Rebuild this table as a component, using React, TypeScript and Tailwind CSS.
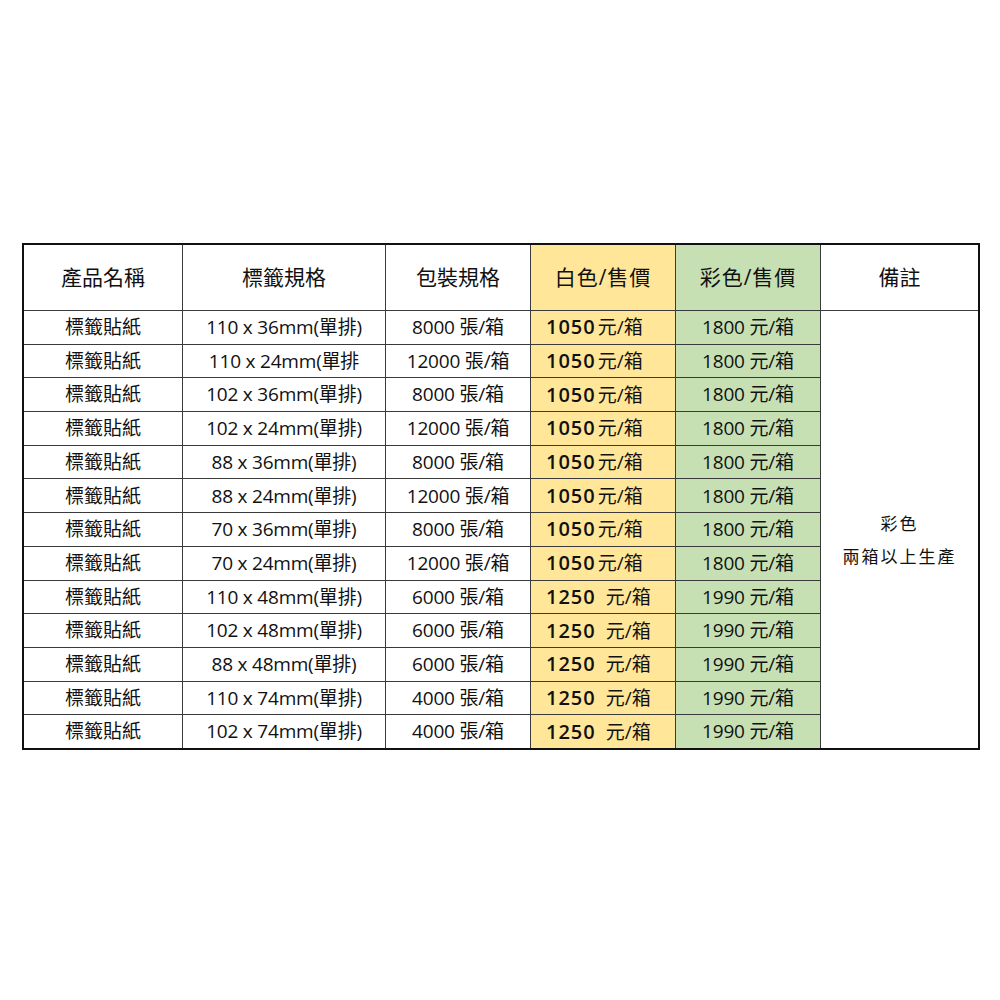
import React from "react";

const rows: [string, string, string, string, string][] = [
  ["標籤貼紙", "110 x 36mm(單排)", "8000 張/箱", "1050元/箱", "1800 元/箱"],
  ["標籤貼紙", "110 x 24mm(單排", "12000 張/箱", "1050元/箱", "1800 元/箱"],
  ["標籤貼紙", "102 x 36mm(單排)", "8000 張/箱", "1050元/箱", "1800 元/箱"],
  ["標籤貼紙", "102 x 24mm(單排)", "12000 張/箱", "1050元/箱", "1800 元/箱"],
  ["標籤貼紙", "88 x 36mm(單排)", "8000 張/箱", "1050元/箱", "1800 元/箱"],
  ["標籤貼紙", "88 x 24mm(單排)", "12000 張/箱", "1050元/箱", "1800 元/箱"],
  ["標籤貼紙", "70 x 36mm(單排)", "8000 張/箱", "1050元/箱", "1800 元/箱"],
  ["標籤貼紙", "70 x 24mm(單排)", "12000 張/箱", "1050元/箱", "1800 元/箱"],
  ["標籤貼紙", "110 x 48mm(單排)", "6000 張/箱", "1250 元/箱", "1990 元/箱"],
  ["標籤貼紙", "102 x 48mm(單排)", "6000 張/箱", "1250 元/箱", "1990 元/箱"],
  ["標籤貼紙", "88 x 48mm(單排)", "6000 張/箱", "1250 元/箱", "1990 元/箱"],
  ["標籤貼紙", "110 x 74mm(單排)", "4000 張/箱", "1250 元/箱", "1990 元/箱"],
  ["標籤貼紙", "102 x 74mm(單排)", "4000 張/箱", "1250 元/箱", "1990 元/箱"],
];

function Price({ text }: { text: string }) {
  const m = text.match(/^(\d+)(\s?)(.*)$/);
  const num = m ? m[1] : text;
  const sp = m ? m[2] : "";
  const rest = m ? m[3] : "";
  return (
    <span className="flex items-baseline">
      <span className="text-[20px] font-semibold tracking-[1px]">{num}</span>
      <span className={sp ? "inline-block w-[10px]" : "inline-block w-[2px]"} />
      <span className="text-[19px]">{rest}</span>
    </span>
  );
}

export default function App() {
  return (
    <div
      className="w-[1000px] h-[1000px] bg-white pt-[243px] pl-[22px] text-[#111]"
      style={{ fontFamily: '"Open Sans", "Noto Sans CJK TC", sans-serif' }}
    >
      <div className="grid w-max grid-cols-[158px_202px_144px_144px_144px_157px] grid-rows-[65px_repeat(13,32.7px)] gap-px bg-[#3a3a3a] border-2 border-[#111]">
        <div className="bg-white flex items-center justify-center text-[21px]">產品名稱</div>
        <div className="bg-white flex items-center justify-center text-[21px]">標籤規格</div>
        <div className="bg-white flex items-center justify-center text-[21px]">包裝規格</div>
        <div className="bg-[#ffe699] flex items-center justify-center text-[21px] tracking-[1px]">白色/售價</div>
        <div className="bg-[#c6e0b4] flex items-center justify-center text-[21px] tracking-[1px]">彩色/售價</div>
        <div className="bg-white flex items-center justify-center text-[21px]">備註</div>
        {rows.map((r, i) => (
          <React.Fragment key={i}>
            <div className="bg-white flex items-center justify-center text-[19px]">{r[0]}</div>
            <div className="bg-white flex items-center justify-center text-[19px] tracking-[-0.2px]">{r[1]}</div>
            <div className="bg-white flex items-center justify-center text-[19px] tracking-[-0.2px]">{r[2]}</div>
            <div className="bg-[#ffe699] flex items-center pl-[15px]">
              <Price text={r[3]} />
            </div>
            <div className="bg-[#c6e0b4] flex items-center justify-center text-[19px] tracking-[-0.2px]">{r[4]}</div>
            {i === 0 ? (
              <div className="bg-white row-span-13 flex flex-col items-center justify-center pt-[21px] text-[17px] leading-[33px] tracking-[2px]">
                <span>彩色</span>
                <span>兩箱以上生產</span>
              </div>
            ) : null}
          </React.Fragment>
        ))}
      </div>
    </div>
  );
}
